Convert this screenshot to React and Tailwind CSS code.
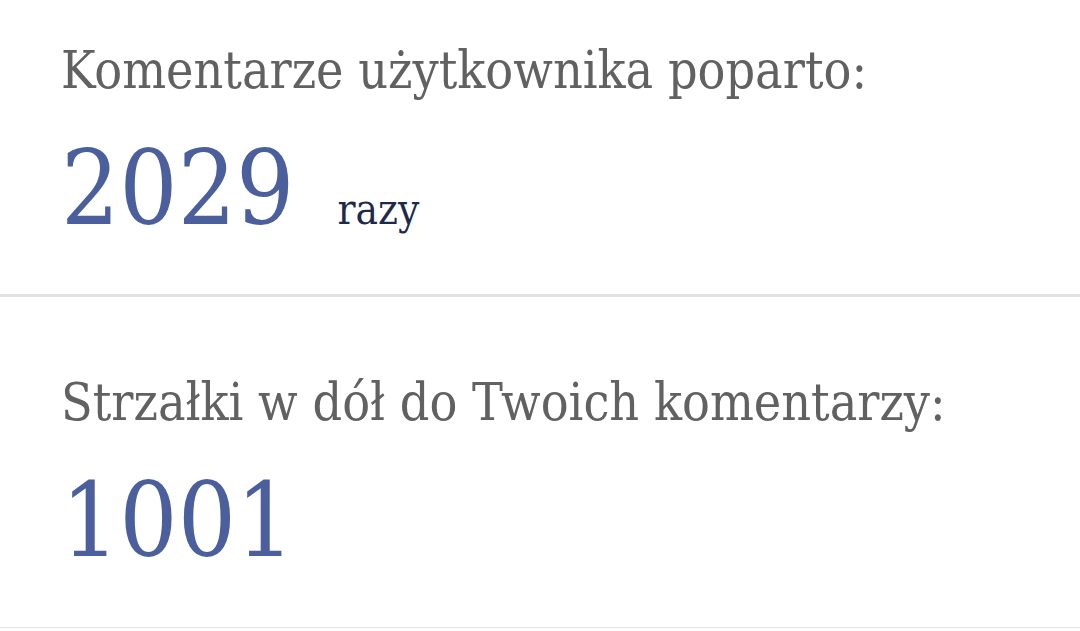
export default function App() {
  const font = { fontFamily: "'DejaVu Serif Condensed', 'DejaVu Serif', 'Liberation Serif', serif" };
  return (
    <div className="w-[1080px] h-[631px] bg-white overflow-hidden" style={font}>
      <div className="h-[297px] pl-[61px] pt-[40px] border-b-[3px] border-[#e2e2e2] [font-stretch:condensed]">
        <div className="text-[51.5px] leading-[60px] text-[#616161]">Komentarze użytkownika poparto:</div>
        <div className="flex items-baseline mt-[34px]">
          <span className="text-[102px] leading-[110px] text-[#4a5f9c]">2029</span>
          <span className="ml-[43px] text-[42px] text-[#1f2a4a]">razy</span>
        </div>
      </div>
      <div className="h-[331px] pl-[61px] pt-[75px] border-b-[1px] border-[#e2e2e2] [font-stretch:condensed]">
        <div className="text-[51.5px] leading-[60px] text-[#616161]">Strzałki w dół do Twoich komentarzy:</div>
        <div className="flex items-baseline mt-[34px]">
          <span className="text-[102px] leading-[110px] text-[#4a5f9c]">1001</span>
        </div>
      </div>
    </div>
  );
}
